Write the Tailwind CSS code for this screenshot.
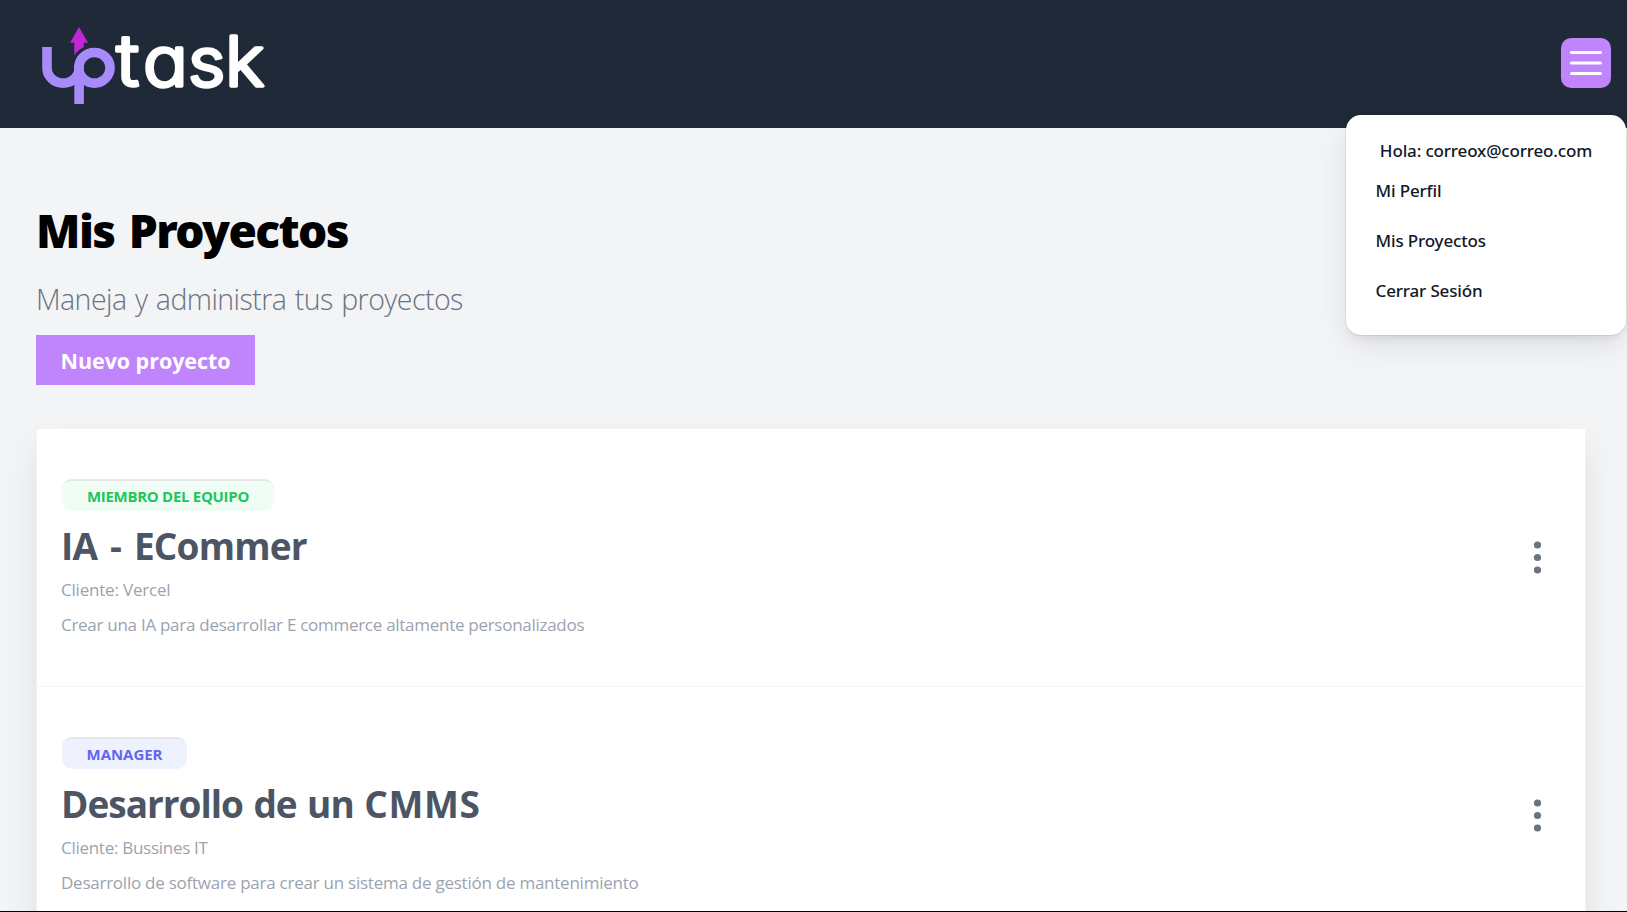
<!DOCTYPE html>
<html lang="es">
<head>
<meta charset="utf-8">
<title>UpTask</title>
<script src="https://cdn.jsdelivr.net/npm/@tailwindcss/browser@4"></script>
</head>
<body class="relative h-[912px] overflow-hidden bg-[#f3f4f6] font-['Open_Sans',sans-serif]">
  <header class="flex h-32 items-start justify-between bg-[#1f2937] pr-4">
    <svg class="h-32 w-[280px]" viewBox="0 0 280 128" aria-label="uptask">
      <g fill="none" stroke="#a78bfa" stroke-width="9.6">
        <path d="M47 47V68A16.1 15.1 0 0 0 79.2 68"/>
        <ellipse cx="94.4" cy="67.8" rx="15.6" ry="15.3"/>
        <path d="M79.1 66V104"/>
      </g>
      <path fill="#c026d3" d="M79 27L88 42.7H83.8V47.3Q77.500 50 74.300 55.500V42.700H70Z"/>
      <text transform="scale(1.08 1)" x="107.600 132.300 174 208.300" y="86" font-size="67" fill="#fff" stroke="#fff" stroke-width="3.400" stroke-linejoin="round" class="font-['Inter',sans-serif] font-light [font-feature-settings:'cv11']"><tspan font-size="71">t</tspan><tspan font-size="69">a</tspan>s<tspan font-size="69">k</tspan></text>
    </svg>
    <button class="mt-[38px] flex size-[50px] items-center justify-center rounded-[10px] bg-[#c084fc]" aria-label="Menú">
      <svg class="size-[50px]" viewBox="0 0 50 50" fill="none" stroke="#fff" stroke-width="3" stroke-linecap="round"><path d="M10.500 14.500H39.500M10.500 25H39.500M10.500 35.500H39.500"/></svg>
    </button>
  </header>

  <main class="pl-9 pr-[41px] pt-[72px]">
    <h1 class="font-['Noto_Sans',sans-serif] text-[46px] font-black leading-[60px] tracking-[-1.6px] text-black [word-spacing:4px]">Mis Proyectos</h1>
    <p class="mt-[19px] text-[28.5px] font-light leading-10 tracking-[-0.55px] text-[#6b7280] [word-spacing:1.6px]">Maneja y administra tus proyectos</p>
    <nav class="mt-4 flex">
      <a class="flex h-[50px] w-[219px] items-center justify-center bg-[#c084fc] pt-0.5 text-[21.5px] font-bold tracking-[-0.05px] text-white">Nuevo proyecto</a>
    </nav>
    <ul class="mt-11 divide-y divide-[#f3f4f6] border-x border-[#f3f4f6] bg-white shadow-[0_16px_32px_-4px_rgb(0_0_0/0.1),0_5px_8px_-5px_rgb(0_0_0/0.1)]">
      <li class="flex h-[258px] items-start justify-between pl-[25px] pr-[37px] pt-[50px]">
        <div>
          <p class="flex h-8 w-[212px] items-center justify-center rounded-[10px] border-t-2 border-[#e5e7eb] bg-[#f0fdf4] text-[15px] font-bold tracking-[-0.29px] text-[#22c55e]">MIEMBRO DEL EQUIPO</p>
          <h2 class="-ml-px mt-[13px] text-[37px] font-bold leading-[44px] tracking-[-0.8px] text-[#4b5563] [word-spacing:4px]">IA - ECommer</h2>
          <p class="-ml-px mt-[7px] text-[17px] leading-[30px] tracking-[-0.2px] text-[#9ca3af]">Cliente: Vercel</p>
          <p class="-ml-px mt-[5px] text-[17px] leading-[30px] tracking-[-0.28px] text-[#9ca3af]">Crear una IA para desarrollar E commerce altamente personalizados</p>
        </div>
        <svg class="mt-[58px] h-10 w-[22px]" viewBox="0 0 22 40" fill="#6b7280"><circle cx="11.500" cy="8" r="3.600"/><circle cx="11.500" cy="20.500" r="3.600"/><circle cx="11.500" cy="33" r="3.600"/></svg>
      </li>
      <li class="flex h-[258px] items-start justify-between pl-[25px] pr-[37px] pt-[50px]">
        <div>
          <p class="flex h-8 w-[125px] items-center justify-center rounded-[10px] border-t-2 border-[#e5e7eb] bg-[#eef2ff] text-[15px] font-bold tracking-[-0.05px] text-[#6366f1]">MANAGER</p>
          <h2 class="-ml-px mt-[13px] text-[37px] font-bold leading-[44px] tracking-[-1px] text-[#4b5563] [word-spacing:1.8px]">Desarrollo de un <span class="tracking-[0.7px]">CMMS</span></h2>
          <p class="-ml-px mt-[7px] text-[17px] leading-[30px] tracking-[-0.28px] text-[#9ca3af]">Cliente: Bussines IT</p>
          <p class="-ml-px mt-[5px] text-[17px] leading-[30px] tracking-[-0.245px] text-[#9ca3af]">Desarrollo de software para crear un sistema de gestión de mantenimiento</p>
        </div>
        <svg class="mt-[58px] h-10 w-[22px]" viewBox="0 0 22 40" fill="#6b7280"><circle cx="11.500" cy="8" r="3.600"/><circle cx="11.500" cy="20.500" r="3.600"/><circle cx="11.500" cy="33" r="3.600"/></svg>
      </li>
    </ul>
  </main>

  <div class="absolute right-px top-[115px] h-[220px] w-[280px] rounded-[15px] bg-white pt-[21px] font-['Noto_Sans',sans-serif] text-[17px] font-medium leading-[30px] tracking-[-0.15px] text-[#111827] shadow-[0_10px_32px_-4px_rgb(0_0_0/0.12),0_5px_8px_-4px_rgb(0_0_0/0.1)] ring-1 ring-[#111827]/5">
    <p class="text-center">Hola: correox@correo.com</p>
    <a class="ml-[29.5px] mt-2.5 block">Mi Perfil</a>
    <a class="ml-[29.5px] mt-5 block">Mis Proyectos</a>
    <a class="ml-[29.5px] mt-5 block">Cerrar Sesión</a>
  </div>
  <div class="absolute inset-x-0 bottom-0 h-px bg-black"></div>
</body>
</html>
